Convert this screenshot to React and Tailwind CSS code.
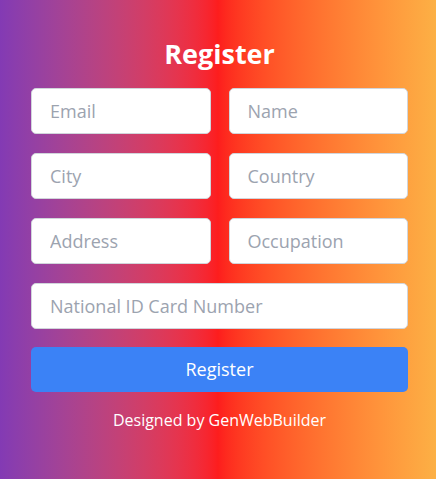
import React from 'react';

const fields = [
  { name: 'email', placeholder: 'Email', type: 'email' },
  { name: 'name', placeholder: 'Name', type: 'text' },
  { name: 'city', placeholder: 'City', type: 'text' },
  { name: 'country', placeholder: 'Country', type: 'text' },
  { name: 'address', placeholder: 'Address', type: 'text' },
  { name: 'occupation', placeholder: 'Occupation', type: 'text' },
];

const inputClass =
  'h-[46px] w-full rounded-[5px] border border-[#d1d5db] bg-white px-[18px] text-[18px] text-gray-800 placeholder-[#9ca3af] outline-none';

const App = () => {
  return (
    <div
      className="min-h-[479px] w-full bg-gradient-to-r from-[#833ab4] via-[#fd1d1d] to-[#fcb045] pt-[35px] pl-[31px] pr-[28px]"
      style={{ fontFamily: '"Open Sans", sans-serif' }}
    >
      <h1 className="text-center text-[27px] font-bold leading-[37px] text-white">Register</h1>

      <form className="mt-4" onSubmit={(e) => e.preventDefault()}>
        <div className="grid grid-cols-2 gap-x-[18px] gap-y-[19px]">
          {fields.map((f) => (
            <input key={f.name} type={f.type} name={f.name} placeholder={f.placeholder} className={inputClass} />
          ))}
          <input
            type="text"
            name="nationalId"
            placeholder="National ID Card Number"
            className={`${inputClass} col-span-2`}
          />
        </div>

        <button
          type="submit"
          className="mt-[18px] h-[45px] w-full rounded-[5px] bg-[#3b82f6] text-[18px] text-white"
        >
          Register
        </button>
      </form>

      <p className="mt-[17px] text-center text-[16px] leading-[22px] text-white">Designed by GenWebBuilder</p>
    </div>
  );
};

export default App;
